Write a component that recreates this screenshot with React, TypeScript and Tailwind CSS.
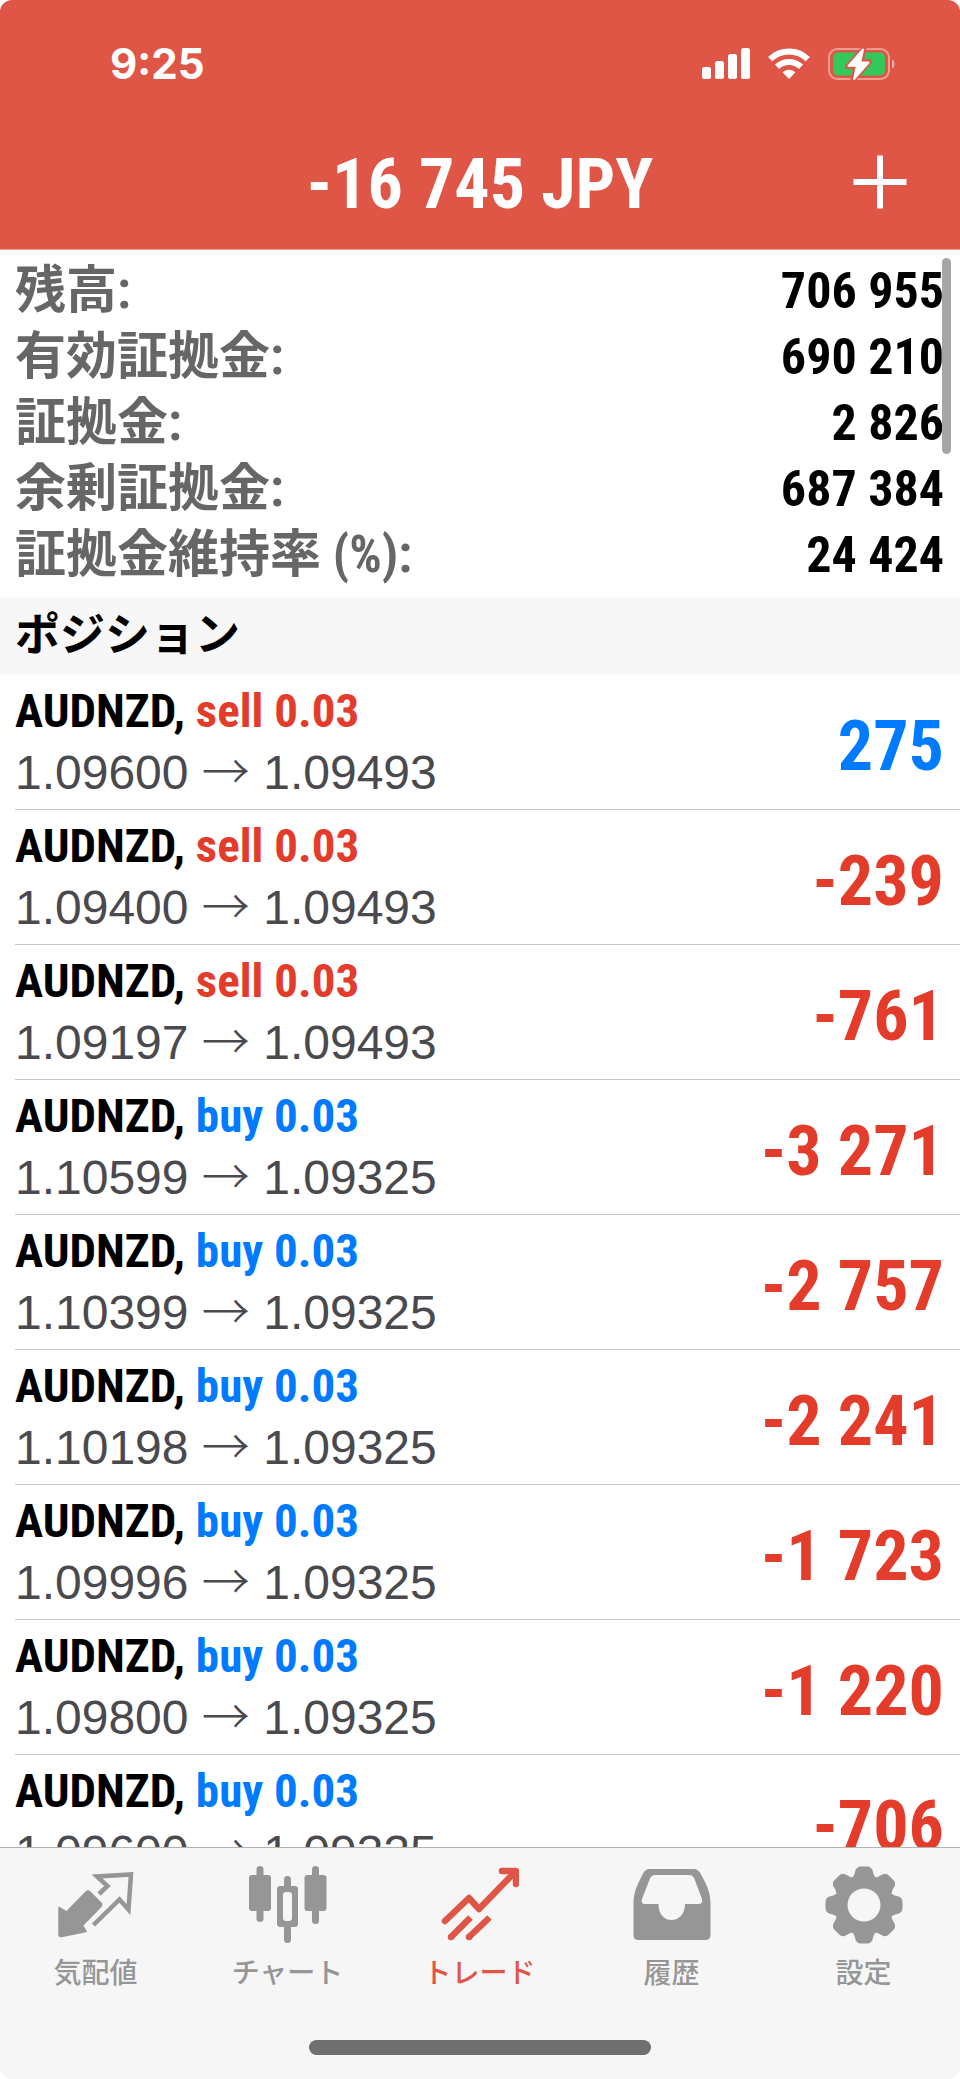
import type { ReactNode } from 'react';

type Side = 'sell' | 'buy';

const summary: [string, string][] = [
  ['残高:', '706 955'],
  ['有効証拠金:', '690 210'],
  ['証拠金:', '2 826'],
  ['余剰証拠金:', '687 384'],
  ['証拠金維持率 (%):', '24 424'],
];

const positions: { side: Side; open: string; now: string; profit: string }[] = [
  { side: 'sell', open: '1.09600', now: '1.09493', profit: '275' },
  { side: 'sell', open: '1.09400', now: '1.09493', profit: '-239' },
  { side: 'sell', open: '1.09197', now: '1.09493', profit: '-761' },
  { side: 'buy', open: '1.10599', now: '1.09325', profit: '-3 271' },
  { side: 'buy', open: '1.10399', now: '1.09325', profit: '-2 757' },
  { side: 'buy', open: '1.10198', now: '1.09325', profit: '-2 241' },
  { side: 'buy', open: '1.09996', now: '1.09325', profit: '-1 723' },
  { side: 'buy', open: '1.09800', now: '1.09325', profit: '-1 220' },
  { side: 'buy', open: '1.09600', now: '1.09325', profit: '-706' },
];

const narrow = "font-['Roboto_Condensed','Roboto','Noto_Sans_CJK_JP',sans-serif]";

function SignalIcon() {
  return (
    <svg width="48" height="32" viewBox="0 0 48 32" fill="#fff" aria-hidden="true">
      <rect x="0" y="19" width="9" height="12" rx="2.5" />
      <rect x="13" y="13" width="9" height="18" rx="2.5" />
      <rect x="26" y="6" width="9" height="25" rx="2.5" />
      <rect x="39" y="0" width="9" height="31" rx="2.5" />
    </svg>
  );
}

function WifiIcon() {
  return (
    <svg width="42" height="32" viewBox="0 0 42 32" fill="none" stroke="#fff" strokeWidth="6" aria-hidden="true">
      <path d="M2.2 11.2a27 27 0 0 1 37.6 0" />
      <path d="M9 18.7a17.5 17.5 0 0 1 24 0" />
      <path d="M14.5 24.3a9.5 9.5 0 0 1 13 0L21 31Z" fill="#fff" stroke="none" />
    </svg>
  );
}

function BatteryIcon() {
  return (
    <svg width="68" height="34" viewBox="0 0 68 34" aria-hidden="true">
      <rect x="1" y="2" width="60" height="30" rx="8.5" fill="none" stroke="#fff" strokeOpacity=".42" strokeWidth="2" />
      <path d="M64 12.5c3.6 1.8 3.6 7.2 0 9Z" fill="#fff" fillOpacity=".5" />
      <rect x="5" y="5.5" width="52" height="23" rx="5" fill="#34c759" />
      <path d="M36 1.5 19.5 19.5h8.5L25 33 41.5 14.8H33Z" fill="#df5646" stroke="#df5646" strokeWidth="5" strokeLinejoin="round" />
      <path d="M35 2.5 20.5 18.8h8.5L26 32 40.5 15.5H32.2Z" fill="#fff" stroke="#fff" strokeWidth="2" strokeLinejoin="round" />
    </svg>
  );
}

function QuotesIcon() {
  return (
    <svg width="78" height="78" viewBox="0 0 78 78" aria-hidden="true">
      <path d="M29.5 25.5Q31.5 24.5 33 26L44.5 37.5Q45 39 44 40.5L25.5 59.5 29 65.5 4.5 70.5Q2 71 2 68.5V41.5L9.5 46Z" fill="currentColor" stroke="currentColor" strokeWidth="1.5" strokeLinejoin="round" />
      <path d="M42 28 50.5 20 40 10.5 74 8.5 71.5 43.5 62.5 33.5 36.5 59" fill="none" stroke="currentColor" strokeWidth="4.5" />
    </svg>
  );
}

function ChartIcon() {
  return (
    <svg width="78" height="78" viewBox="0 0 78 78" fill="currentColor" aria-hidden="true">
      <rect x="7.5" y="0" width="7" height="56" rx="3.5" />
      <rect x="0" y="9" width="22" height="36" rx="3" />
      <rect x="63" y="0" width="7" height="58" rx="3.5" />
      <rect x="55.5" y="9" width="22" height="36" rx="3" />
      <path d="M35 22V13.5a3.5 3.5 0 0 1 7 0V22ZM35 60V73.5a3.5 3.5 0 0 0 7 0V60Z" />
      <path fillRule="evenodd" d="M31 20h15a3 3 0 0 1 3 3v35a3 3 0 0 1-3 3H31a3 3 0 0 1-3-3V23a3 3 0 0 1 3-3Zm6 6a3 3 0 0 0-3 3v23a3 3 0 0 0 3 3h3a3 3 0 0 0 3-3V29a3 3 0 0 0-3-3Z" />
    </svg>
  );
}

function TradeIcon() {
  return (
    <svg width="78" height="78" viewBox="0 0 78 78" fill="none" stroke="currentColor" strokeWidth="6.5" strokeLinecap="round" aria-hidden="true">
      <path d="M4 55 28 32 38 43 74 6" strokeLinejoin="round" />
      <path d="M61 5H75V18" strokeLinejoin="round" />
      <path d="M10 71 29.5 51.5M28 71 48.5 51.5" strokeLinecap="butt" />
      <path d="M10 71h.01M28 71h.01" />
    </svg>
  );
}

function HistoryIcon() {
  return (
    <svg width="78" height="78" viewBox="0 0 78 78" fill="currentColor" aria-hidden="true">
      <path fillRule="evenodd" d="M16 3H61Q65 3 67.5 7.5C74 19 77.5 27 77.5 37V69Q77.5 74 72.5 74H5Q.5 74 .5 69V37C.5 27 4 19 10 7.5Q12.5 3 16 3ZM22 9Q18.5 9 17 12.5L9 33Q7.5 38 12 38H25.5C25.5 48 31 54 38.5 54S52 48 52 38H65Q70.5 38 69 33L61.5 13Q60 9 56 9Z" />
    </svg>
  );
}

function SettingsIcon() {
  return (
    <svg width="78" height="78" viewBox="-39 -39 78 78" fill="currentColor" aria-hidden="true">
      <defs>
        <mask id="gear-hole">
          <rect x="-39" y="-39" width="78" height="78" fill="#fff" />
          <circle r="16.5" fill="#000" />
        </mask>
        <path id="gear-tooth" d="M-13-26Q-10-28-9-33Q-8-38.5-3-38.5H3Q8-38.5 9-33Q10-28 13-26L0 0Z" />
      </defs>
      <g mask="url(#gear-hole)">
        <circle r="29.5" />
        {[0, 45, 90, 135, 180, 225, 270, 315].map((a) => (
          <use key={a} href="#gear-tooth" transform={`rotate(${a})`} />
        ))}
      </g>
    </svg>
  );
}

const tabs: { label: string; icon: ReactNode; active?: boolean }[] = [
  { label: '気配値', icon: <QuotesIcon /> },
  { label: 'チャート', icon: <ChartIcon /> },
  { label: 'トレード', icon: <TradeIcon />, active: true },
  { label: '履歴', icon: <HistoryIcon /> },
  { label: '設定', icon: <SettingsIcon /> },
];

export default function App() {
  return (
    <div className={`flex h-screen flex-col overflow-hidden rounded-xl bg-white text-black ${narrow}`}>
      <header className="shrink-0 border-b border-[#e9a097] bg-[#df5646] text-white">
        <div className="flex h-32 items-center justify-between pr-16 pl-[110px]">
          <time className="font-['Inter',sans-serif] text-[42px] leading-[48px] font-bold">9:25</time>
          <div className="flex items-center gap-[18px]">
            <SignalIcon />
            <WifiIcon />
            <BatteryIcon />
          </div>
        </div>
        <div className="grid h-[121px] grid-cols-[1fr_auto_1fr] items-start">
          <h1 className="col-start-2 pt-4 text-[70px] leading-[80px] font-bold">-16 745 JPY</h1>
          <button type="button" aria-label="新規注文" className="mt-[27px] mr-[53px] justify-self-end">
            <svg width="54" height="54" viewBox="0 0 54 54" stroke="#fff" strokeWidth="6" aria-hidden="true">
              <path d="M27 .5v53M.5 27h53" />
            </svg>
          </button>
        </div>
      </header>

      <main className="relative min-h-0 flex-1 overflow-hidden">
        <dl className="pt-2 pr-4 pb-[9px] pl-[15px] font-bold">
          {summary.map(([label, value]) => (
            <div key={label} className="flex h-[66px] items-center justify-between">
              <dt className="text-[51px] leading-[66px] text-[#666]">{label}</dt>
              <dd className="text-[50px] leading-[66px]">{value}</dd>
            </div>
          ))}
        </dl>
        <h2 className="bg-[#f7f7f7] px-[15px] pb-2 font-['Noto_Sans_CJK_JP',sans-serif] text-[45px] leading-[70px] font-bold">ポジション</h2>
        <ul>
          {positions.map((p, i) => (
            <li key={i} className="ml-[15px] flex h-[135px] items-center justify-between border-b border-[#c8c7cc] pr-4">
              <div>
                <p className="text-[47px] leading-[62px] font-bold">
                  AUDNZD, <span className={p.side === 'sell' ? 'text-[#e43c2b]' : 'text-[#007aff]'}>{p.side} 0.03</span>
                </p>
                <p className="font-['Liberation_Sans',sans-serif] text-[48px] leading-[62px] text-[#4a494e]">
                  {p.open} <span className="font-['Noto_Sans_CJK_JP',sans-serif] leading-none font-light">→</span> {p.now}
                </p>
              </div>
              <span className={`pt-2 text-[70px] leading-[80px] font-bold ${p.profit.startsWith('-') ? 'text-[#e43c2b]' : 'text-[#007aff]'}`}>{p.profit}</span>
            </li>
          ))}
        </ul>
        <div className="absolute top-2 right-[9px] h-[196px] w-[9px] rounded-full bg-[#a6a6a6]" />
      </main>

      <footer className="shrink-0 border-t border-[#b2b2b2] bg-[#f6f6f6]">
        <nav className="grid h-48 grid-cols-5 font-['Noto_Sans_CJK_JP',sans-serif] text-[28px] leading-[40px] font-medium">
          {tabs.map((t) => (
            <button key={t.label} type="button" className={`flex flex-col items-center gap-[7px] pt-[18px] pr-px ${t.active ? 'text-[#df5646]' : 'text-[#969696]'}`}>
              {t.icon}
              <span>{t.label}</span>
            </button>
          ))}
        </nav>
        <div className="mx-auto mb-6 h-[15px] w-[342px] rounded-full bg-[#6f6f6f]" />
      </footer>
    </div>
  );
}
